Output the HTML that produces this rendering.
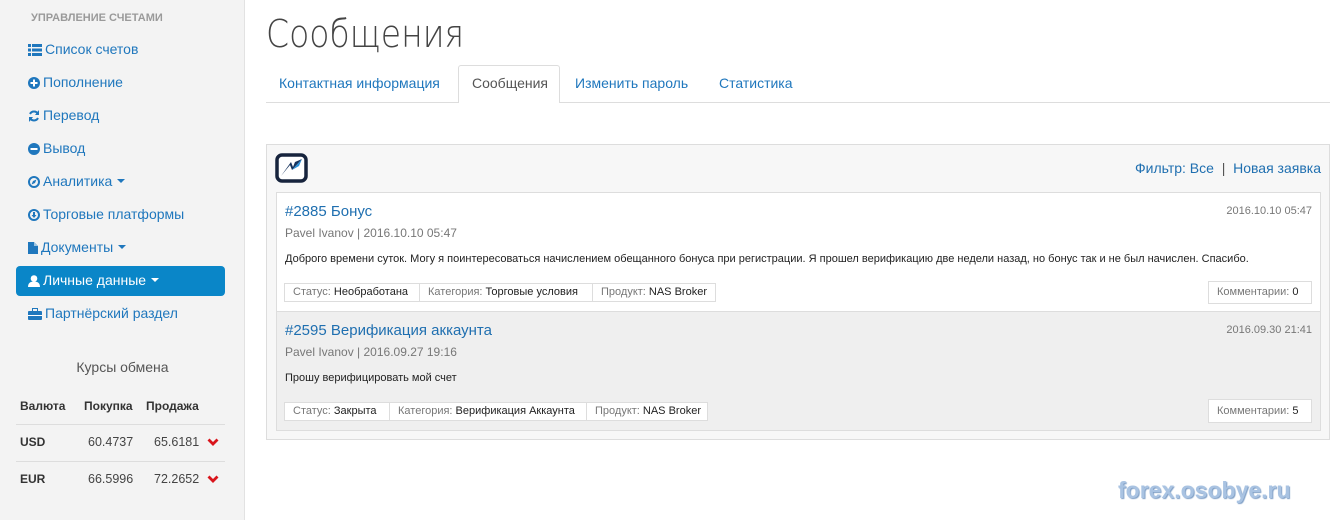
<!DOCTYPE html>
<html><head><meta charset="utf-8"><style>
*{margin:0;padding:0;box-sizing:border-box}
body{width:1332px;height:520px;overflow:hidden;background:#fff;font-family:"Liberation Sans",sans-serif;position:relative}
.abs{position:absolute;white-space:nowrap}
#side{position:absolute;left:0;top:0;width:245px;height:520px;background:#f3f3f3;border-right:1px solid #e2e2e2}
.mi{position:absolute;left:28px;font-size:14px;color:#1f77bd;line-height:18px}
.mi svg{vertical-align:-2px;margin-right:3px}
.car{display:inline-block;width:0;height:0;border-left:4px solid transparent;border-right:4px solid transparent;border-top:4px solid currentColor;vertical-align:3px;margin-left:5px}
.t{font-family:"Liberation Sans",sans-serif}
.tag{position:absolute;height:19px;border:1px solid #ddd;background:#fff;font-size:11px;line-height:17px;color:#777;padding:0 8px;white-space:nowrap;font-family:"Liberation Sans",sans-serif}
.tag b{font-weight:normal;color:#222}
</style></head><body>
<div id="side">
 <div class="abs" style="left:31px;top:12px;font-size:11px;font-weight:bold;color:#9a9a9a">УПРАВЛЕНИЕ СЧЕТАМИ</div>
 <div class="mi" style="top:40px"><svg width="14" height="12"><rect x="0" y="0" width="3" height="3" fill="#1f77bd"/><rect x="4" y="0" width="10" height="3" fill="#1f77bd"/><rect x="0" y="4.5" width="3" height="3" fill="#1f77bd"/><rect x="4" y="4.5" width="10" height="3" fill="#1f77bd"/><rect x="0" y="9" width="3" height="3" fill="#1f77bd"/><rect x="4" y="9" width="10" height="3" fill="#1f77bd"/></svg>Список счетов</div>
 <div class="mi" style="top:73px"><svg width="12" height="12"><circle cx="6" cy="6" r="6" fill="#1f77bd"/><rect x="2.5" y="5" width="7" height="2" fill="#fff"/><rect x="5" y="2.5" width="2" height="7" fill="#fff"/></svg>Пополнение</div>
 <div class="mi" style="top:106px"><svg width="12" height="12"><path d="M10 4A4.5 4.5 0 0 0 2 4M2 8A4.5 4.5 0 0 0 10 8" stroke="#1f77bd" stroke-width="2" fill="none"/><path d="M11 0V5H7Z M1 12V7H5Z" fill="#1f77bd"/></svg>Перевод</div>
 <div class="mi" style="top:139px"><svg width="12" height="12"><circle cx="6" cy="6" r="6" fill="#1f77bd"/><rect x="2.5" y="5" width="7" height="2" fill="#fff"/></svg>Вывод</div>
 <div class="mi" style="top:172px"><svg width="12" height="12"><circle cx="6" cy="6" r="5" stroke="#1f77bd" stroke-width="2" fill="none"/><path d="M8.5 3.5L7 7 3.5 8.5 5 5Z" fill="#1f77bd"/></svg>Аналитика<span class="car"></span></div>
 <div class="mi" style="top:205px"><svg width="12" height="12"><circle cx="6" cy="6" r="5" stroke="#1f77bd" stroke-width="2" fill="none"/><path d="M5 3H7V6H8.5L6 9 3.5 6H5Z" fill="#1f77bd"/></svg>Торговые платформы</div>
 <div class="mi" style="top:238px"><svg width="10" height="12"><path d="M0 0H6L10 4V12H0Z" fill="#1f77bd"/><path d="M6 0V4H10" fill="#9cc3e0"/></svg>Документы<span class="car"></span></div>
 <div class="abs" style="left:16px;top:266px;width:209px;height:30px;background:#0a86c8;border-radius:4px"></div>
 <div class="mi" style="top:271px;color:#fff"><svg width="12" height="12"><circle cx="6" cy="3.5" r="3.3" fill="#fff"/><path d="M0 12Q0 6.5 6 6.5Q12 6.5 12 12Z" fill="#fff"/></svg>Личные данные<span class="car"></span></div>
 <div class="mi" style="top:304px"><svg width="14" height="12"><rect x="0" y="3" width="14" height="9" rx="1" fill="#1f77bd"/><rect x="4.5" y="0.5" width="5" height="3" stroke="#1f77bd" fill="none"/><rect x="0" y="7" width="14" height="1" fill="#fff"/></svg>Партнёрский раздел</div>
 <div class="abs" style="left:0;width:245px;text-align:center;top:359px;font-size:14px;color:#555">Курсы обмена</div>
 <div class="abs" style="left:20px;top:399px;font-size:12px;font-weight:bold;color:#333">Валюта</div>
 <div class="abs" style="left:84px;top:399px;font-size:12px;font-weight:bold;color:#333">Покупка</div>
 <div class="abs" style="left:146px;top:399px;font-size:12px;font-weight:bold;color:#333">Продажа</div>
 <div class="abs" style="left:16px;top:424px;width:209px;height:1px;background:#ddd"></div>
 <div class="abs" style="left:16px;top:461px;width:209px;height:1px;background:#ddd"></div>
 <div class="abs" style="left:20px;top:435px;font-size:12px;font-weight:bold;color:#333">USD</div>
 <div class="abs" style="left:88px;top:435px;font-size:12.5px;color:#444">60.4737</div>
 <div class="abs" style="left:154px;top:435px;font-size:12.5px;color:#444">65.6181</div>
 <div class="abs" style="left:20px;top:472px;font-size:12px;font-weight:bold;color:#333">EUR</div>
 <div class="abs" style="left:88px;top:472px;font-size:12.5px;color:#444">66.5996</div>
 <div class="abs" style="left:154px;top:472px;font-size:12.5px;color:#444">72.2652</div>
 <svg class="abs" style="left:207px;top:438px" width="12" height="9"><path d="M1.5 1.5L6 6 10.5 1.5" stroke="#d9141b" stroke-width="2.8" fill="none"/></svg>
 <svg class="abs" style="left:207px;top:475px" width="12" height="9"><path d="M1.5 1.5L6 6 10.5 1.5" stroke="#d9141b" stroke-width="2.8" fill="none"/></svg>
</div>

<div class="abs" style="left:266px;top:12px;font-size:38px;color:#444;font-family:'DejaVu Sans',sans-serif;font-weight:200;transform:scaleX(0.87);transform-origin:left">Сообщения</div>
<div class="abs" style="left:266px;top:102px;width:1064px;height:1px;background:#ddd"></div>
<div class="abs" style="left:458px;top:65px;width:102px;height:38px;border:1px solid #ddd;border-bottom:none;background:#fff;border-radius:3px 3px 0 0"></div>
<div class="abs" style="left:279px;top:75px;font-size:14px;color:#1f77bd">Контактная информация</div>
<div class="abs" style="left:472px;top:75px;font-size:14px;color:#555">Сообщения</div>
<div class="abs" style="left:575px;top:75px;font-size:14px;color:#1f77bd">Изменить пароль</div>
<div class="abs" style="left:719px;top:75px;font-size:14px;color:#1f77bd">Статистика</div>

<div class="abs" style="left:266px;top:144px;width:1064px;height:296px;border:1px solid #ddd;background:#f7f7f7"></div>
<svg class="abs" style="left:275px;top:153px" width="33" height="30"><rect x="2" y="2" width="29" height="26" rx="5" stroke="#17243d" stroke-width="3.5" fill="#fff"/><path d="M6 23L15 12 17 17 27 6 20 9 18 14 16 9Z" fill="#17335d"/><path d="M17 17L27 6 24 13Z" fill="#2b8fd8"/></svg>
<div class="abs t" style="right:11px;top:160px;font-size:14px;color:#1f6fb0">Фильтр: Все&nbsp;&nbsp;<span style="color:#555">|</span>&nbsp;&nbsp;Новая заявка</div>

<div class="abs" style="left:276px;top:192px;width:1045px;height:120px;border:1px solid #ddd;background:#fff"></div>
<div class="abs t" style="left:285px;top:203px;font-size:15px;color:#1f6fb0">#2885 Бонус</div>
<div class="abs t" style="left:285px;top:226px;font-size:12px;color:#777">Pavel Ivanov | 2016.10.10 05:47</div>
<div class="abs t" style="right:20px;top:205px;font-size:11px;color:#777">2016.10.10 05:47</div>
<div class="abs t" style="left:285px;top:253px;font-size:11px;color:#222">Доброго времени суток. Могу я поинтересоваться начислением обещанного бонуса при регистрации. Я прошел верификацию две недели назад, но бонус так и не был начислен. Спасибо.</div>
<div class="tag" style="left:284px;top:283px;width:136px">Статус: <b>Необработана</b></div>
<div class="tag" style="left:419px;top:283px;width:174px">Категория: <b>Торговые условия</b></div>
<div class="tag" style="left:592px;top:283px;width:124px">Продукт: <b>NAS Broker</b></div>
<div class="tag" style="left:1208px;top:281px;width:104px;height:23px;line-height:21px">Комментарии: <b>0</b></div>

<div class="abs" style="left:276px;top:311px;width:1045px;height:120px;border:1px solid #ddd;background:#efefef"></div>
<div class="abs t" style="left:285px;top:322px;font-size:15px;color:#1f6fb0">#2595 Верификация аккаунта</div>
<div class="abs t" style="left:285px;top:345px;font-size:12px;color:#777">Pavel Ivanov | 2016.09.27 19:16</div>
<div class="abs t" style="right:20px;top:324px;font-size:11px;color:#777">2016.09.30 21:41</div>
<div class="abs t" style="left:285px;top:372px;font-size:11px;color:#222">Прошу верифицировать мой счет</div>
<div class="tag" style="left:284px;top:402px;width:106px">Статус: <b>Закрыта</b></div>
<div class="tag" style="left:389px;top:402px;width:198px">Категория: <b>Верификация Аккаунта</b></div>
<div class="tag" style="left:586px;top:402px;width:122px">Продукт: <b>NAS Broker</b></div>
<div class="tag" style="left:1208px;top:399px;width:104px;height:24px;line-height:22px">Комментарии: <b>5</b></div>

<div class="abs" style="left:1118px;top:477px;font-size:23px;font-weight:bold;color:#a9c3e2;text-shadow:1px 1px 1px #7f9fc6">forex.osobye.ru</div>
</body></html>
